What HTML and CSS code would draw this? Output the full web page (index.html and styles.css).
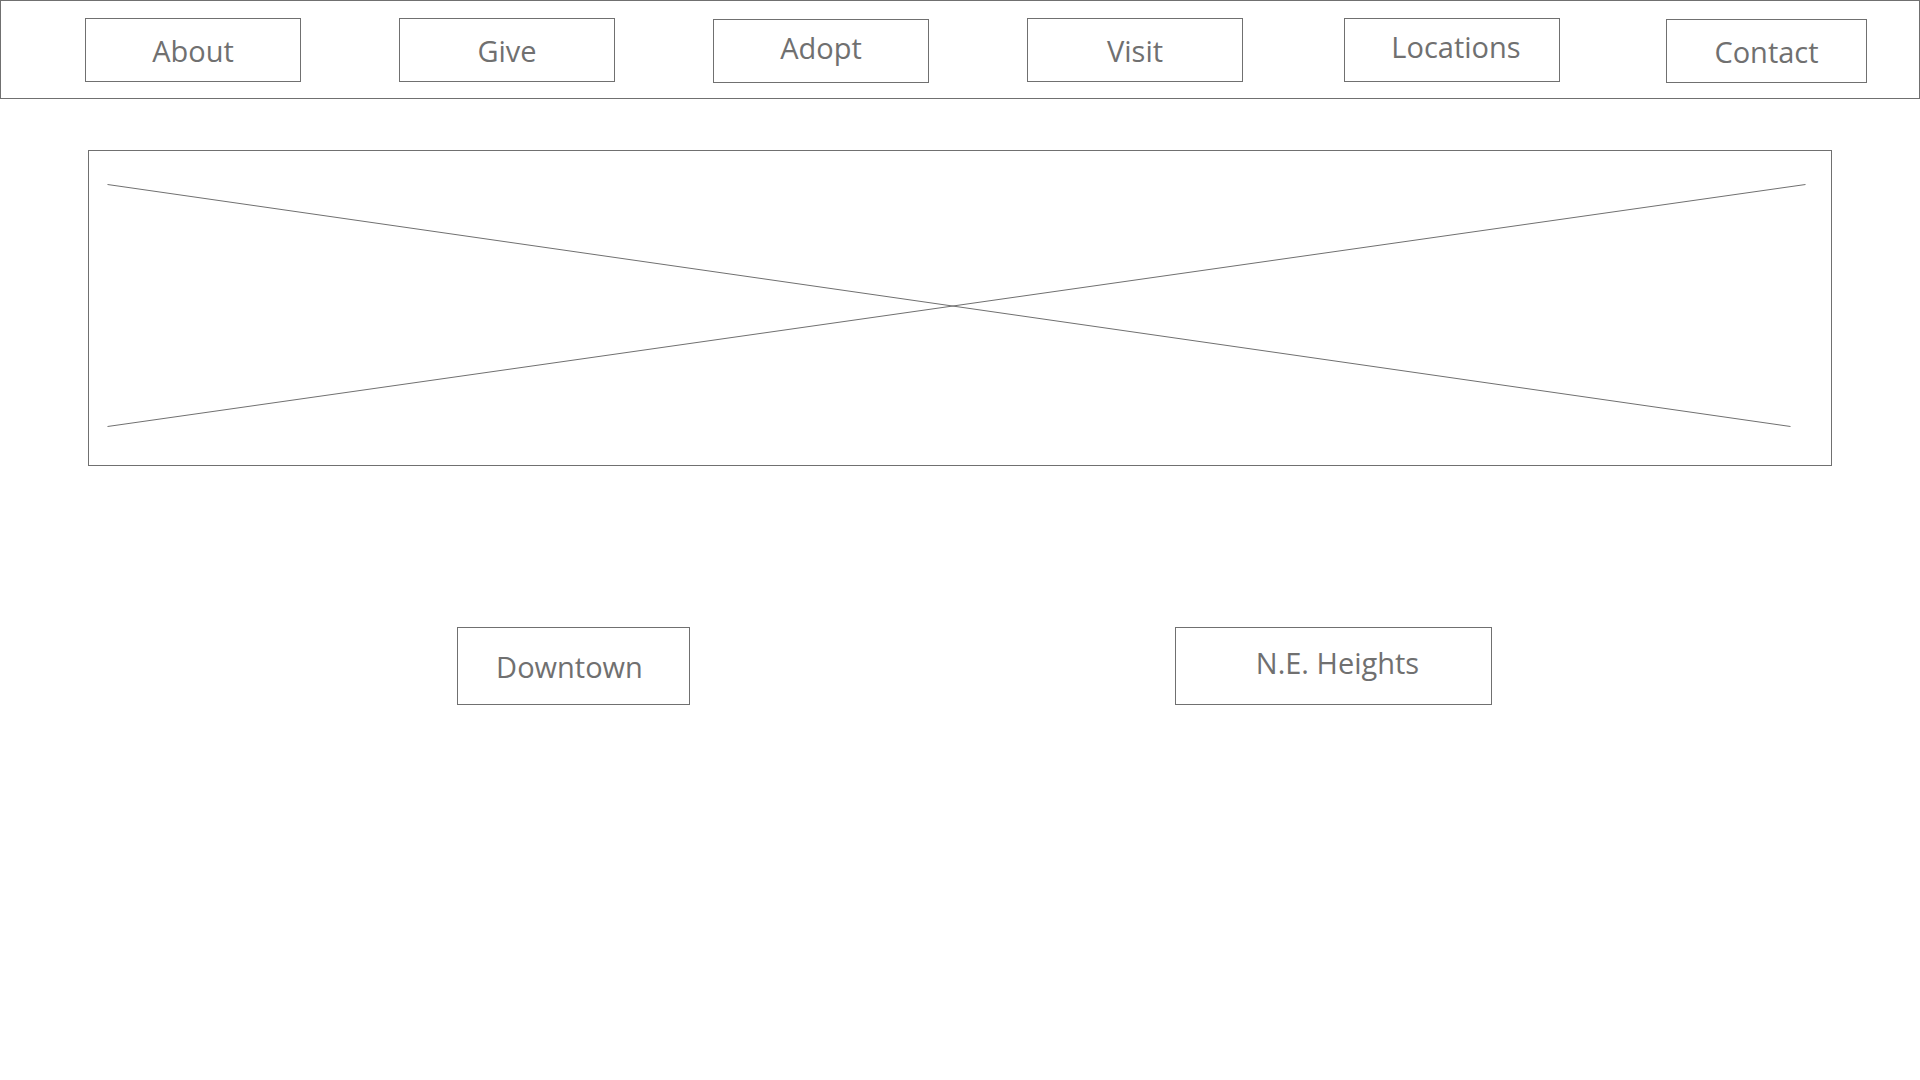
FILE: index.html
```html
<!DOCTYPE html>
<html lang="en">
<head>
<meta charset="utf-8">
<meta name="viewport" content="width=device-width, initial-scale=1">
<title>Locations</title>
<link rel="stylesheet" href="styles.css">
</head>
<body>
<header class="site-header">
  <nav class="main-nav" aria-label="Main">
    <a class="box nav-link" href="#about">About</a>
    <a class="box nav-link" href="#give">Give</a>
    <a class="box nav-link nav-link-low label-high" href="#adopt">Adopt</a>
    <a class="box nav-link" href="#visit">Visit</a>
    <a class="box nav-link label-high label-right" href="#locations">Locations</a>
    <a class="box nav-link nav-link-low nav-link-narrow" href="#contact">Contact</a>
  </nav>
</header>
<main>
  <div class="banner">
    <svg class="banner-cross" viewBox="0 0 1742 314" preserveAspectRatio="none" role="img" aria-label="Banner image placeholder">
      <line x1="18.5" y1="33.5" x2="1701.5" y2="275.5"/>
      <line x1="18.5" y1="275.5" x2="1716.5" y2="33.5"/>
    </svg>
  </div>
  <div class="places">
    <a class="box place place-downtown label-left" href="#downtown">Downtown</a>
    <a class="box place place-heights label-high label-right" href="#heights">N.E. Heights</a>
  </div>
</main>
</body>
</html>
```
FILE: styles.css
```css
* {
  box-sizing: border-box;
}

body {
  margin: 0;
  background: #fff;
  color: #707070;
  font-family: "Open Sans", "Noto Sans", sans-serif;
  font-size: 29px;
  line-height: 40px;
}

.site-header {
  border: 1px solid #707070;
  padding: 17px 52px 15px 84px;
}

.main-nav {
  display: grid;
  grid-template-columns: 314fr 314fr 314fr 317fr 322fr 201fr;
}

.box {
  display: flex;
  align-items: center;
  justify-content: center;
  border: 1px solid #707070;
  padding-top: 2px;
  color: inherit;
  text-decoration: none;
  white-space: nowrap;
}

.nav-link {
  width: 216px;
  max-width: 100%;
  min-width: 0;
  height: 64px;
}

.nav-link-low {
  margin-top: 1px;
}

.nav-link-narrow {
  width: 201px;
}

.label-high {
  padding-bottom: 8px;
}

.label-left {
  padding-right: 8px;
}

.label-right {
  padding-left: 8px;
}

.banner {
  margin: 51px 88px 0;
  border: 1px solid #707070;
  aspect-ratio: 1744 / 316;
}

.banner-cross {
  display: block;
  width: 100%;
  height: 100%;
  stroke: #707070;
  stroke-width: 1;
}

.places {
  display: grid;
  grid-template-columns: 457fr 233fr 485fr 317fr 428fr;
  margin-top: 161px;
}

.place {
  height: 78px;
}

.place-downtown {
  grid-column: 2;
}

.place-heights {
  grid-column: 4;
}
```
